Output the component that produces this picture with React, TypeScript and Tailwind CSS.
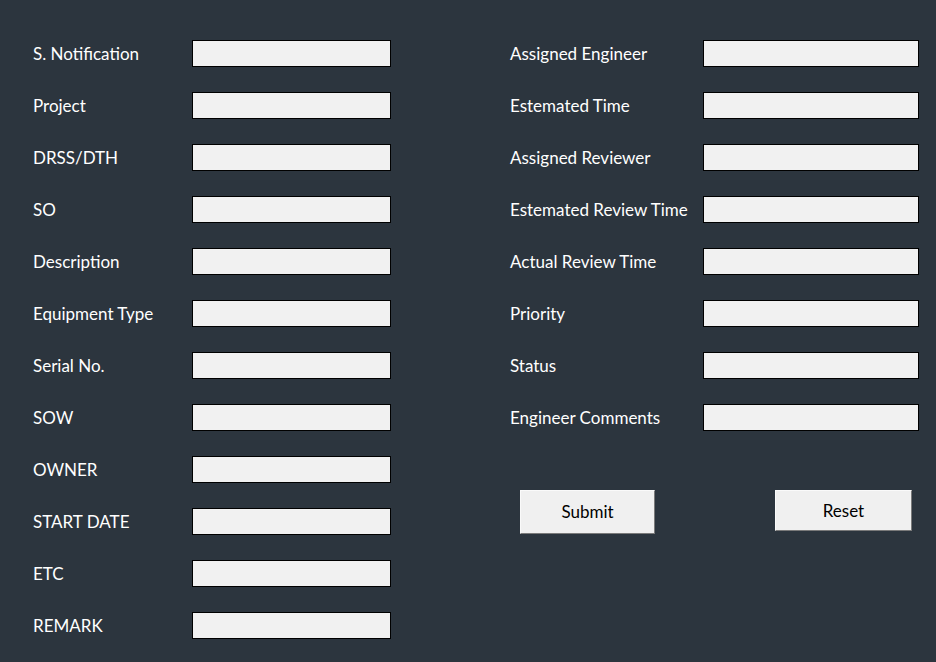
import React from 'react';

const leftFields = [
  'S. Notification',
  'Project',
  'DRSS/DTH',
  'SO',
  'Description',
  'Equipment Type',
  'Serial No.',
  'SOW',
  'OWNER',
  'START DATE',
  'ETC',
  'REMARK',
];

const rightFields = [
  'Assigned Engineer',
  'Estemated Time',
  'Assigned Reviewer',
  'Estemated Review Time',
  'Actual Review Time',
  'Priority',
  'Status',
  'Engineer Comments',
];

const Field = ({ label, labelW, inputW }: { label: string; labelW: string; inputW: string }) => (
  <div className="flex items-center h-[27px]">
    <span className={`${labelW} text-white text-[17px] leading-none whitespace-nowrap -mt-[1px]`}>{label}</span>
    <input
      type="text"
      className={`${inputW} h-[27px] bg-[#f1f1f1] border border-black outline-none`}
    />
  </div>
);

export default function App() {
  return (
    <div
      className="w-[936px] h-[662px] bg-[#2c353e] flex overflow-hidden"
      style={{ fontFamily: 'Lato, "Open Sans", sans-serif' }}
    >
      {/* left column */}
      <div className="pl-[33px] pt-[40px] w-[510px] shrink-0 flex flex-col gap-[25px]">
        {leftFields.map((f) => (
          <Field key={f} label={f} labelW="w-[159px]" inputW="w-[199px]" />
        ))}
      </div>

      {/* right column */}
      <div className="pt-[40px] flex flex-col">
        <div className="flex flex-col gap-[25px]">
          {rightFields.map((f) => (
            <Field key={f} label={f} labelW="w-[193px]" inputW="w-[216px]" />
          ))}
        </div>
        <div className="flex items-start mt-[59px] pl-[10px]">
          <button className="w-[135px] h-[44px] bg-[#f0f0f0] border border-t-[#fafafa] border-l-[#fafafa] border-r-[#7a7a7a] border-b-[#7a7a7a] text-[17px] text-black">
            Submit
          </button>
          <button className="ml-[120px] w-[137px] h-[41px] bg-[#f0f0f0] border border-t-[#fafafa] border-l-[#fafafa] border-r-[#7a7a7a] border-b-[#7a7a7a] text-[17px] text-black">
            Reset
          </button>
        </div>
      </div>
    </div>
  );
}
